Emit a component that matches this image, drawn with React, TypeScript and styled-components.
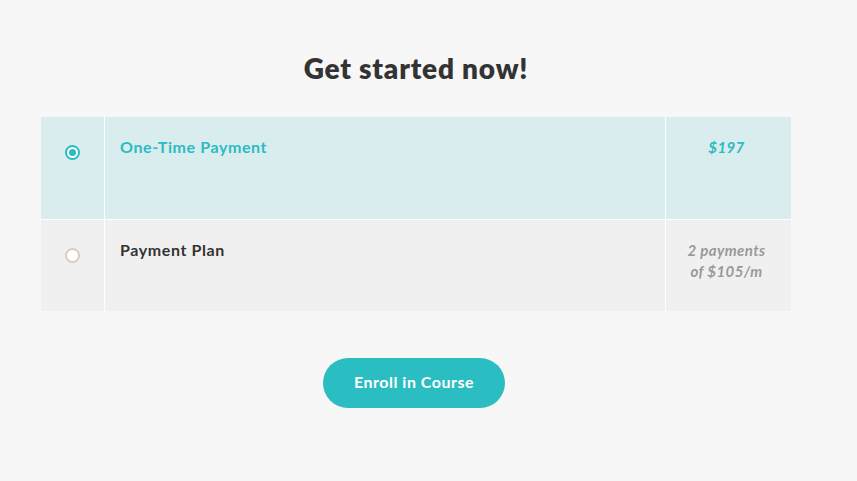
import React, { useState } from "react";
import styled, { createGlobalStyle } from "styled-components";

const Global = createGlobalStyle`
  html, body { margin: 0; padding: 0; background: #f7f7f7; }
  body { font-family: "Lato", "Open Sans", sans-serif; -webkit-font-smoothing: antialiased; }
`;

const Page = styled.div`
  width: 750px;
  margin-left: 41px;
  padding-top: 51px;
  display: flex;
  flex-direction: column;
  align-items: center;
`;

const Title = styled.h1`
  margin: 0 0 32px;
  font-size: 28px;
  line-height: 34px;
  font-weight: 800;
  color: #333333;
  letter-spacing: 0.8px;
`;

const Table = styled.div`
  width: 750px;
  display: flex;
  flex-direction: column;
  gap: 1px;
  background: #ffffff;
`;

const Row = styled.div<{ $active: boolean; $h: number }>`
  display: grid;
  grid-template-columns: 63px 560px 125px;
  column-gap: 1px;
  height: ${(p) => p.$h}px;
  cursor: pointer;
  > div { background: ${(p) => (p.$active ? "#d9ecee" : "#f0f0f0")}; }
`;

const RadioCell = styled.div`
  display: flex;
  justify-content: center;
  padding-top: 28px;
  box-sizing: border-box;
`;

const Radio = styled.span<{ $on: boolean }>`
  width: 15px;
  height: 15px;
  box-sizing: border-box;
  border-radius: 50%;
  border: 2px solid ${(p) => (p.$on ? "#2bbcc1" : "#d8cdbd")};
  background: #ffffff;
  display: flex;
  align-items: center;
  justify-content: center;
  &::after {
    content: "";
    width: 7px;
    height: 7px;
    border-radius: 50%;
    background: ${(p) => (p.$on ? "#2bbcc1" : "transparent")};
  }
`;

const NameCell = styled.div<{ $on: boolean }>`
  padding: 20px 15px 0;
  font-size: 16px;
  line-height: 20px;
  font-weight: 700;
  letter-spacing: 0.6px;
  color: ${(p) => (p.$on ? "#2bbcc1" : "#333333")};
`;

const PriceCell = styled.div<{ $on: boolean }>`
  padding: 20px 8px 0 4px;
  text-align: center;
  font-size: 15px;
  line-height: 21px;
  font-weight: 700;
  font-style: italic;
  letter-spacing: 0.4px;
  color: ${(p) => (p.$on ? "#2bbcc1" : "#999999")};
`;

const Button = styled.button`
  margin-top: 47px;
  margin-right: 4px;
  width: 182px;
  height: 50px;
  padding: 0 0 3px;
  border: none;
  border-radius: 25px;
  background: #2abdc1;
  color: #ffffff;
  font-family: "Lato", "Open Sans", sans-serif;
  font-size: 16px;
  font-weight: 700;
  letter-spacing: 0.5px;
  cursor: pointer;
`;

const plans = [
  { name: "One-Time Payment", price: ["$197"], h: 102 },
  { name: "Payment Plan", price: ["2 payments", "of $105/m"], h: 91 },
];

export default function App() {
  const [sel, setSel] = useState(0);
  return (
    <>
      <Global />
      <Page>
        <Title>Get started now!</Title>
        <Table>
          {plans.map((p, i) => (
            <Row key={p.name} $active={sel === i} $h={p.h} onClick={() => setSel(i)}>
              <RadioCell>
                <Radio $on={sel === i} />
              </RadioCell>
              <NameCell $on={sel === i}>{p.name}</NameCell>
              <PriceCell $on={sel === i}>
                {p.price.map((l) => (
                  <div key={l}>{l}</div>
                ))}
              </PriceCell>
            </Row>
          ))}
        </Table>
        <Button>Enroll in Course</Button>
      </Page>
    </>
  );
}
